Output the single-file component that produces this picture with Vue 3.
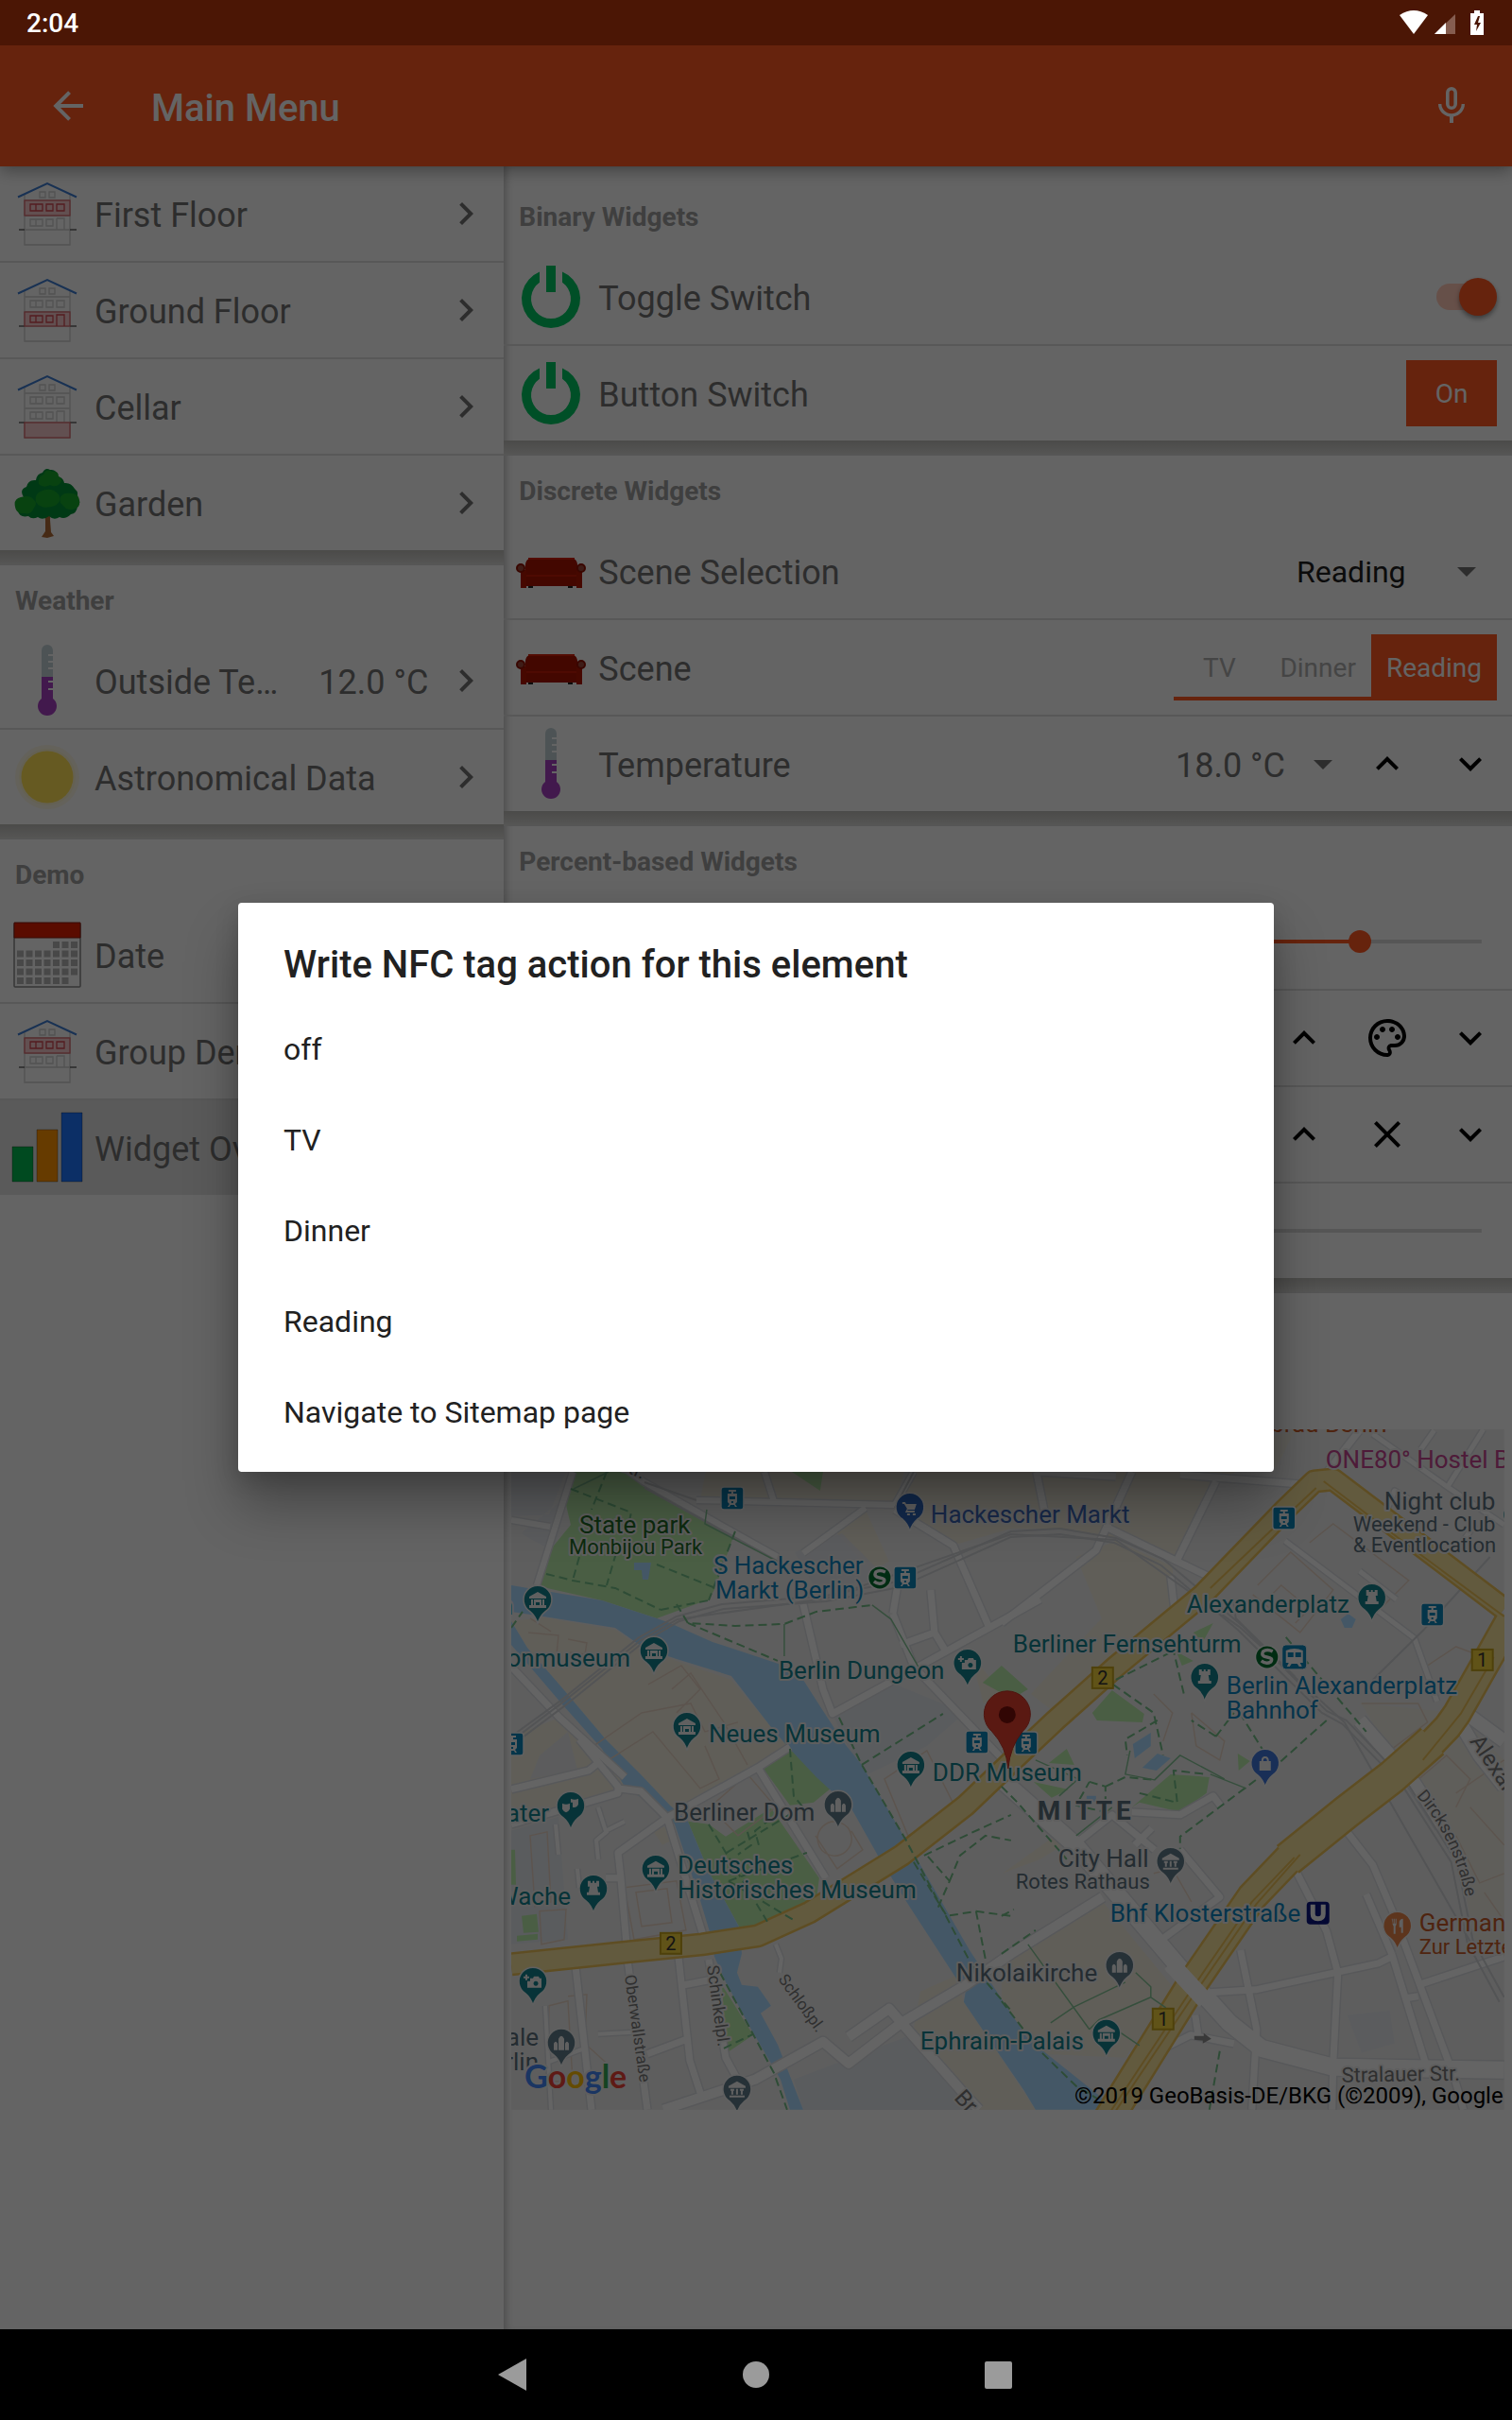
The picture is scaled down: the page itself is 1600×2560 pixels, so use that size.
<script setup>
import { ref } from 'vue'

const leftGroups = [
  {
    title: '',
    items: [
      { label: 'First Floor', icon: 'floor', level: 1 },
      { label: 'Ground Floor', icon: 'floor', level: 2 },
      { label: 'Cellar', icon: 'floor', level: 3 },
      { label: 'Garden', icon: 'tree' }
    ]
  },
  {
    title: 'Weather',
    items: [
      { label: 'Outside Temperature', icon: 'thermo', value: '12.0 °C' },
      { label: 'Astronomical Data', icon: 'sun' }
    ]
  },
  {
    title: 'Demo',
    items: [
      { label: 'Date', icon: 'calendar' },
      { label: 'Group Demo', icon: 'floor', level: 1 },
      { label: 'Widget Overview', icon: 'bars', selected: true }
    ]
  }
]

const actions = ['off', 'TV', 'Dinner', 'Reading', 'Navigate to Sitemap page']
const scenes = ['TV', 'Dinner', 'Reading']
const scene = ref('Reading')
const toggled = ref(true)
const dimmer = ref(83)
const level = ref(0)

const ICON = {
  up: 'M7.41 15.41 12 10.83l4.59 4.58L18 14l-6-6-6 6z',
  down: 'M7.41 8.58 12 13.17l4.59-4.59L18 10l-6 6-6-6z',
  right: 'M8.59 16.58 13.17 12 8.59 7.41 10 6l6 6-6 6z',
  close: 'M19 6.41 17.59 5 12 10.59 6.41 5 5 6.41 10.59 12 5 17.59 6.41 19 12 13.41 17.59 19 19 17.59 13.41 12z',
  drop: 'M7 10l5 5 5-5z',
  back: 'M20 11v2H8l5.5 5.5-1.42 1.42L4.16 12l7.92-7.92L13.5 5.5 8 11h12z',
  mic: 'M17.3 11C17.3 14 14.76 16.1 12 16.1 9.24 16.1 6.7 14 6.7 11H5C5 14.41 7.72 17.23 11 17.72V21H13V17.72C16.28 17.23 19 14.41 19 11M10.8 4.9C10.8 4.24 11.34 3.7 12 3.7 12.66 3.7 13.2 4.24 13.2 4.9L13.19 11.1C13.19 11.76 12.66 12.3 12 12.3 11.34 12.3 10.8 11.76 10.8 11.1M12 14A3 3 0 0 0 15 11V5A3 3 0 0 0 12 2 3 3 0 0 0 9 5V11A3 3 0 0 0 12 14Z',
  palette: 'M12 22A10 10 0 0 1 2 12 10 10 0 0 1 12 2C17.5 2 22 6 22 11A6 6 0 0 1 16 17H14.2C13.9 17 13.7 17.2 13.7 17.5 13.7 17.6 13.8 17.7 13.8 17.8 14.2 18.3 14.4 18.9 14.4 19.5 14.5 20.9 13.4 22 12 22M12 4A8 8 0 0 0 4 12 8 8 0 0 0 12 20C12.3 20 12.5 19.8 12.5 19.5 12.5 19.3 12.4 19.2 12.4 19.1 12 18.6 11.8 18.1 11.8 17.5 11.8 16.1 12.9 15 14.3 15H16A4 4 0 0 0 20 11C20 7.1 16.4 4 12 4M6.5 10C7.3 10 8 10.7 8 11.5S7.3 13 6.5 13 5 12.3 5 11.5 5.7 10 6.5 10M9.5 6C10.3 6 11 6.7 11 7.5S10.3 9 9.5 9 8 8.3 8 7.5 8.7 6 9.5 6M14.5 6C15.3 6 16 6.7 16 7.5S15.3 9 14.5 9 13 8.3 13 7.5 13.7 6 14.5 6M17.5 10C18.3 10 19 10.7 19 11.5S18.3 13 17.5 13 16 12.3 16 11.5 16.7 10 17.5 10Z'
}

const stepRows = [
  { buttons: [['Up', 'up'], ['Pick colour', 'palette'], ['Down', 'down']] },
  { buttons: [['Up', 'up'], ['Stop', 'close'], ['Down', 'down']] }
]

/* Calendar cells: first week starts on the fifth column, last one ends on the sixth. */
const calendarCells = []
for (let r = 0; r < 5; r++) {
  for (let c = 0; c < 7; c++) {
    if ((r === 0 && c < 4) || (r === 4 && c > 5)) continue
    calendarCells.push({ x: 4 + c * 9.5, y: 22 + r * 9.5 })
  }
}

/* Map content, on a 1051 x 720 canvas. */
const roads = [
  ['M65 45 27 165M0 96 41 103M116 38 141 56 282 135M196 75 406 80 426 45M268 45 278 76M375 83 309 131', 6],
  ['M406 85 468 123 506 210M309 185 330 275 340 301 506 210 560 180M404 195 426 251 519 348M404 195 409 165M444 170 448 215 412 228M448 215 460 235', 7],
  ['M0 251 51 305 120 368M0 418 113 385 113 378 72 328M0 381 82 361 92 353M113 380 137 383 165 411', 7],
  ['M116 545 122 545 116 475 113 448 165 411 261 358 295 336M261 358 333 475M165 411 206 545M68 568 85 720M123 561 144 720M209 561 227 665 246 700M177 558 189 668 202 708M183 588 209 583M144 661 187 645M100 475 116 475', 7],
  ['M47 418 50 450M92 400 100 425 120 415M92 455 90 435 102 425M70 465 72 485M280 545 286 560 284 575M36 610 42 720M38 670 75 656M92 640 130 638', 4],
  ['M161 720 258 688 330 648 357 671 413 628 481 588 529 555 626 495M413 628 481 705 495 720M357 643 400 613 413 628', 10],
  ['M519 371 598 441 712 575 760 628 794 655 870 675 1051 678', 18],
  ['M519 205 619 128 657 45M633 105 743 158M705 138 746 55M698 155 702 191M708 48 836 58M898 1 856 55M640 50 560 45M556 45 564 85', 7],
  ['M912 5 991 61 1051 101M1029 0 991 61M977 1 963 21M925 90 935 65 960 80M819 118 956 221 980 288M898 150 937 180M1000 130 1020 100', 5],
  ['M884 425 912 461 932 508 998 685 1008 720M932 555 970 678M831 468 863 531 875 575 870 671 869 720M739 596 788 593 918 565 932 558M960 588 1051 558M772 551 789 635 784 720M905 492 932 555M947 602 960 600', 7],
  ['M691 538 750 495 708 445M657 405 708 408 743 388 752 400M602 435 636 408 681 445M660 440 678 422M691 655 719 641 765 650M724 620 727 640', 7],
  ['M898 308 956 375 985 420M998 300 1025 345 1051 378M1010 300 1051 330', 14]
]
const rails = [
  'M0 325 51 288 134 221 175 198 223 185 333 176 409 161 529 108 581 105 640 115 691 138 774 208 863 298 884 308 949 375 1001 458 1018 541 1051 601',
  'M0 335 56 293 139 226 178 203 225 190 333 182 411 167 529 114 581 111 638 120 688 144 769 212 858 300 880 312 944 378 995 458 1012 543 1046 606',
  'M0 330 53 290 136 224 176 201 333 179 529 111 640 117 772 210 882 310 1015 542',
  'M141 56 196 75M141 62 282 140M406 83 426 45M764 180 767 200 830 262M1036 135 967 211 912 265'
]
const paths = [
  'M63 63 127 88 122 110M37 153 65 160 110 168 158 191M72 135 65 160M111 131 101 165M154 143 216 168M237 108 209 181M158 191 209 181M175 185 187 205 237 208 289 206 323 193 382 186M187 205 282 245M101 45 85 85',
  'M371 355 457 301M347 305 371 355 418 435 488 568 529 615M437 451 485 428 529 408M464 478 475 451 502 430 529 435M426 458 461 515 492 510 529 515M492 510 502 561M441 452 464 478 450 510',
  'M295 338 299 388 313 405M209 418 271 521M228 448 299 405M230 478 313 448M230 478 300 520M250 426 254 440 240 450M262 440 258 425 275 412M0 210 12 193',
  'M863 308 815 351 708 431 708 444M746 325 720 308M684 308 650 328 652 345M612 373 629 378 629 405 598 398 612 373M629 378 650 368 681 371M519 378 536 395 588 455M665 385 705 395 701 361 736 365M746 325 765 300M771 300 796 340',
  'M750 658 739 720M519 605 560 658 598 695 620 708M221 575 278 681 292 720M225 655 256 640M519 515 532 508M519 555 555 530M637 270 680 300 690 345M640 265 700 235M700 230 712 280M820 220 905 320'
]
const greenLines = ['M382 186 402 201 433 255M289 206 289 240M103 45 66 63M207 85 205 100 282 140M547 545 612 635M571 628 596 611 650 585M612 635 622 625 677 601 677 590 661 575M677 601 693 612M655 340 650 365 681 371 708 345 755 370M598 430 636 400M555 350 600 370 580 388M640 635 665 652M740 365 778 380']
const buildings = [
  'M80 340 138 300 190 290 205 320 240 310M95 355 150 320 175 350 200 380 220 370 205 335M170 275 190 258 225 310 250 355M145 270 180 250 200 275 175 300M18 215 50 218 48 238 25 240M60 222 80 226 78 238 62 236M20 200 42 214',
  'M120 485 175 478 185 530 130 540zM132 490 165 486 170 522 138 526zM210 400 250 365 280 400 240 430zM20 430 38 426 42 500 25 505zM30 510 58 508 56 540 32 545zM330 420a18 18 0 1 0 30 10 18 18 0 0 0-30-10M322 430 345 465 372 445 360 425M395 370 440 340 470 400 420 430z',
  'M790 165 825 130 870 170 835 215 785 175M800 180 815 165 845 190 830 205M845 120 870 100 950 160 920 190M60 600 80 598 78 650 100 670M40 610 60 605 65 690 38 690z',
  'M720 300 725 335 750 350 755 330 720 300M955 375 990 345 1015 370 1000 400M1000 385 1051 350M1015 400 1051 440M1000 430 1025 480 1051 470M1030 490 1051 520M680 470 700 465 720 500M900 290 960 290 970 310 930 340M970 250 1000 230 1040 245M680 280 700 300 690 330'
]

const T = '#12818c', B = '#0c83bd', S = '#5b6f7c', G = '#1e6b26', O = '#c65a28', N = '#3c68b8'
const labels = [
  { t: 'State park', x: 72, y: 110, c: G },
  { t: 'Monbijou Park', x: 61, y: 132, c: G, s: 1 },
  { t: 'S Hackescher', x: 214, y: 153, c: B },
  { t: 'Markt (Berlin)', x: 216, y: 179, c: B },
  { t: 'Hackescher Markt', x: 444, y: 99, c: N },
  { t: 'n', x: 2, y: 196, c: T, a: 'end' },
  { t: 'onmuseum', x: 126, y: 251, c: T, a: 'end' },
  { t: 'Berlin Dungeon', x: 283, y: 264, c: T },
  { t: 'Neues Museum', x: 209, y: 331, c: T },
  { t: 'DDR Museum', x: 446, y: 372, c: T },
  { t: 'Berliner Dom', x: 172, y: 414, c: S },
  { t: 'ater', x: 40, y: 415, c: T, a: 'end' },
  { t: 'Deutsches', x: 176, y: 470, c: T },
  { t: 'Historisches Museum', x: 176, y: 496, c: T },
  { t: 'Wache', x: 63, y: 503, c: T, a: 'end' },
  { t: 'Nikolaikirche', x: 471, y: 584, c: S },
  { t: 'Ephraim-Palais', x: 433, y: 656, c: T },
  { t: 'ale', x: 29, y: 652, c: S, a: 'end' },
  { t: 'rlin', x: 29, y: 678, c: S, a: 'end' },
  { t: 'Berliner Fernsehturm', x: 531, y: 236, c: T },
  { t: 'Alexanderplatz', x: 715, y: 194, c: T },
  { t: 'Berlin Alexanderplatz', x: 757, y: 280, c: B },
  { t: 'Bahnhof', x: 757, y: 306, c: B },
  { t: 'Night club', x: 924, y: 85, c: S },
  { t: 'Weekend - Club', x: 891, y: 108, c: S, s: 1 },
  { t: '& Eventlocation', x: 891, y: 130, c: S, s: 1 },
  { t: 'ONE80° Hostel B', x: 862, y: 41, c: '#c2458f' },
  { t: 'Hofbräu Berlin', x: 927, y: 3, c: O, a: 'end' },
  { t: 'City Hall', x: 579, y: 463, c: S },
  { t: 'Rotes Rathaus', x: 534, y: 486, c: S, s: 1 },
  { t: 'Bhf Klosterstraße', x: 634, y: 521, c: B },
  { t: 'German', x: 961, y: 531, c: O },
  { t: 'Zur Letzte', x: 961, y: 555, c: O, s: 1 }
]
const streets = [
  { t: 'Oberwallstraße', x: 120, y: 578, r: 82, f: 17 },
  { t: 'Schinkelpl.', x: 207, y: 568, r: 82, f: 18 },
  { t: 'Schloßpl.', x: 282, y: 582, r: 54, f: 17 },
  { t: 'Br', x: 468, y: 708, r: 48, f: 24 },
  { t: 'Str.', x: 112, y: 41, r: 24, f: 20 },
  { t: 'Alexan', x: 1014, y: 330, r: 56, f: 24 },
  { t: 'Stralauer Str.', x: 879, y: 691, r: -1, f: 22 }
]
const GLYPH = {
  museum: 'M0-9-9-4v2H9v-2zM-7-1h2v6h-2zM5-1h2v6H5zM-9 5H9v3H-9zM-4-1h8v6h-2v-3h-4v3h-2z',
  camera: 'M-3-4h3l1-2h5l1 2h2v10H-6v-7h3zM-8-8h2v2h2v2h-2v2h-2v-2h-2v-2h2zM3-1a2.500 2.500 0 1 0 .1 0z',
  castle: 'M-6-9h3v2h2v-2h2v2h2v-2h3v6h-2l1 6h2v3h-14v-3h2l1-6h-2z',
  church: 'M-8 0q2-4 4 0v7h-4zM4 0q2-4 4 0v7h-4zM-3-5q3-6 6 0V7h-6z',
  civic: 'M0-9-9-4v2H9v-2zM-7-1h4v2h-1v4h-2v-4h-1zM3-1h4v2H6v4H4v-4H3zM-1-1h2v6h-2zM-8 6H8v2H-8z',
  cart: 'M-8-6h3l1 2H7l-2 6h-7l-1 1h8v2h-10l2-4-3-5h-2zM-3 6h3v2h-3zM3 6h3v2H3z',
  bag: 'M-6-3h2q0-5 4-5t4 5h2v10H-6zM-2-3h4q0-3-2-3t-2 3z',
  theatre: 'M-9-3q4 2 8 0v6q-4 7-8 0zM0-8q4 2 8 0v6q-2 4-6 3v-5h-2z',
  food: 'M-6-8h1v5h1v-5h1v5h1v-5h1v6l-1 2v8h-2v-8l-1-2zM2-5q1-3 4-3v15h-2v-6h-2z'
}
const pins = [
  [28, 181, 'museum', T], [151, 235, 'museum', T], [186, 315, 'museum', T], [483, 248, 'camera', T],
  [422, 83, 'cart', '#2f66bd'], [423, 356, 'museum', T], [63, 399, 'theatre', T], [153, 466, 'museum', T],
  [87, 487, 'castle', T], [23, 585, 'camera', T], [53, 650, 'church', '#607c8a'], [239, 699, 'civic', '#607c8a'],
  [346, 398, 'church', '#607c8a'], [911, 179, 'castle', T], [734, 263, 'castle', T], [798, 354, 'bag', '#3f76d9'],
  [698, 458, 'civic', '#607c8a'], [644, 568, 'church', '#607c8a'], [630, 640, 'museum', T],
  [938, 526, 'food', '#e8844a'], [1065, 91, 'museum', T]
]
const trams = [[234, 73], [417, 157], [493, 331], [1, 333], [818, 94], [975, 196], [545, 332]]
const shields = [[169, 544, '2'], [626, 263, '2'], [1028, 244, '1'], [690, 624, '1']]
const sbahn = [[390, 157], [800, 241]]
const google = [['G', '#4285f4'], ['o', '#ea4335'], ['o', '#fbbc05'], ['g', '#4285f4'], ['l', '#34a853'], ['e', '#ea4335']]
</script>

<template>
  <div class="screen">
    <div class="status-bar">
      <span class="clock">2:04</span>
      <svg class="status-icons" viewBox="0 0 92 28" aria-hidden="true">
        <path d="M1 6Q16-4 31 6L16 26z" fill="#fff" />
        <path d="M60 5v21H38z" fill="#855d50" />
        <path d="M50 14v12H38z" fill="#fff" />
        <path d="M76 4h4V1h6v3h4v23H76z" fill="#fff" />
        <path d="M84 7l-4 9h3l-1 7 5-9h-3l2-7z" fill="#4b1605" />
      </svg>
    </div>

    <header class="app-bar">
      <button class="icon-button" aria-label="Back"><svg class="ic" viewBox="0 0 24 24"><path :d="ICON.back" /></svg></button>
      <h1>Main Menu</h1>
      <button class="icon-button" aria-label="Voice"><svg class="ic" viewBox="0 0 24 24"><path :d="ICON.mic" /></svg></button>
    </header>

    <main class="panes">
      <nav class="left-pane">
        <section v-for="group in leftGroups" :key="group.title" class="group">
          <h2 v-if="group.title">{{ group.title }}</h2>
          <a v-for="item in group.items" :key="item.label" href="#" class="row" :class="{ selected: item.selected }">
            <svg class="item-icon" viewBox="0 0 72 72" aria-hidden="true">
              <g v-if="item.icon === 'floor'" fill="none" stroke-width="1.3">
                <g stroke="#cdcdcd">
                  <path d="M12 16V69H60V16M12 22H60M12 38H60M12 53H60M28 13h6v6h-6zM38 13h6v6h-6z" />
                  <path d="M18 26h6v7h-6zM24 26h7v7h-7zM35 26h7v7h-7zM46 26h8v7h-8zM18 42h6v7h-6zM24 42h7v7h-7zM35 42h7v7h-7zM46 41h8v12M46 41v12" />
                </g>
                <path d="M6 53h6M60 53h7" stroke="#666" />
                <path d="M5 18.500 36 4 67 18.500" stroke="#3d7bd0" stroke-width="2" />
                <g stroke="#d8646a">
                  <rect v-if="item.level === 1" x="12" y="22" width="48" height="16" fill="#f5c8ca" />
                  <path v-if="item.level === 1" d="M18 26h6v7h-6zM24 26h7v7h-7zM35 26h7v7h-7zM46 26h8v7h-8z" stroke="#d04850" />
                  <rect v-if="item.level === 2" x="12" y="38" width="48" height="15" fill="#f5c8ca" />
                  <path v-if="item.level === 2" d="M18 42h6v7h-6zM24 42h7v7h-7zM35 42h7v7h-7zM46 53V41h8v12" stroke="#d04850" />
                  <rect v-if="item.level === 3" x="12" y="53" width="48" height="16" fill="#f5c8ca" />
                </g>
              </g>
              <g v-else-if="item.icon === 'tree'">
                <path d="M32 40h8l-1 14 1 13 3 4-7 2-6-1 4-6 0-12z" fill="#b06a35" />
                <path d="M5 45q-5-6-1-11 2-4 7-4-5-8 3-11 2-8 10-7 1-7 7-8 3-6 8-3 7-1 8 7 6 1 7 7 7-1 11 6 5 4 2 9 6 5 1 10-1 7-7 8-6 6-12 3-6 4-11-1-7 5-12 1-6 3-10-1-9 2-11-5z" fill="#008f35" />
                <path d="M27 16q-1-8 5-10 3-7 9-3 7-1 7 5 6 3 1 8-5 4-10 1-7 4-12-1zM2 40q-2-8 6-10 10-3 14 3 4 3 0 8-3 8-10 6-9 1-10-7zM24 35q-2-9 7-12 10-4 17 4 4 7-4 12-14 5-20-4zM50 36q-2-8 5-10 8-1 13 2 4 6 1 12-6 5-13 2z" fill="#16a52a" />
              </g>
              <g v-else-if="item.icon === 'thermo'">
                <path d="M30 32V4a6 6 0 0 1 12 0v4h-5v2h5v5h-5v2h5v5h-5v2h5v8z" fill="#c1d0d5" />
                <path d="M30 32h12v4h-5v2h5v6h-5v2h5v9a10 10 0 1 1-12 0z" fill="#a63fc0" />
              </g>
              <g v-else-if="item.icon === 'sun'">
                <circle cx="36" cy="36" r="34" fill="#f8f0c8" opacity=".45" />
                <circle cx="36" cy="36" r="30" fill="#fbf3d0" />
                <circle cx="36" cy="36" r="27.500" fill="#ffe055" />
              </g>
              <g v-else-if="item.icon === 'calendar'">
                <rect x="1" y="3" width="70" height="67" rx="1" fill="#fafafa" stroke="#858585" stroke-width="1.500" />
                <path d="M1 2h70v16H1z" fill="#e01e00" stroke="#8a1a0c" />
                <rect v-for="(cell, i) in calendarCells" :key="i" :x="cell.x" :y="cell.y" width="7" height="7" fill="#b4b4b4" />
              </g>
              <g v-else stroke-opacity=".3" stroke="#000">
                <path d="M-1 35h22v37H-1z" fill="#00b950" />
                <path d="M25 17h22v55H25z" fill="#ff9500" />
                <path d="M51-1h22v73H51z" fill="#2076ff" />
              </g>
            </svg>
            <span class="label">{{ item.label }}</span>
            <span v-if="item.value" class="value">{{ item.value }}</span>
            <svg class="ic" viewBox="0 0 24 24" aria-hidden="true"><path :d="ICON.right" /></svg>
          </a>
        </section>
      </nav>

      <div class="right-pane">
        <section class="group">
          <h2>Binary Widgets</h2>
          <div class="row">
            <svg class="item-icon" viewBox="0 0 72 72" fill="#00c562"><path d="M24 9.400A31 31 0 1 0 48 9.400V20.800A21 21 0 1 1 24 20.800zM31 3h10v28H31z" /></svg>
            <label class="label" for="toggle">Toggle Switch</label>
            <input id="toggle" v-model="toggled" type="checkbox" class="toggle" />
          </div>
          <div class="row">
            <svg class="item-icon" viewBox="0 0 72 72" fill="#00c562"><path d="M24 9.400A31 31 0 1 0 48 9.400V20.800A21 21 0 1 1 24 20.800zM31 3h10v28H31z" /></svg>
            <span class="label">Button Switch</span>
            <div class="segments"><button class="active">On</button></div>
          </div>
        </section>

        <section class="group">
          <h2>Discrete Widgets</h2>
          <div v-for="kind in ['Scene Selection', 'Scene']" :key="kind" class="row">
            <svg class="item-icon" viewBox="0 0 72 72" aria-hidden="true">
              <path d="M12 51h5v3h-5zM54 51h5v3h-5z" fill="#222" />
              <path d="M9 32q-1-10 9-10h37q10 0 9 10v20H9z" fill="#a81200" />
              <path d="M10 40h53v2H10z" fill="#c21a06" />
              <path d="M12 23h49" stroke="#cf2008" stroke-width="2" />
              <path d="M4 35h6v19H4zM63 35h6v19h-6z" fill="#b01400" />
              <circle cx="4" cy="33" r="4" fill="#9c4a3c" stroke="#8e1000" stroke-width="2" />
              <circle cx="68" cy="33" r="4" fill="#9c4a3c" stroke="#8e1000" stroke-width="2" />
            </svg>
            <label v-if="kind === 'Scene Selection'" class="label" for="scene">{{ kind }}</label>
            <span v-else class="label">{{ kind }}</span>
            <div v-if="kind === 'Scene Selection'" class="select">
              <select id="scene" v-model="scene">
                <option v-for="s in scenes" :key="s">{{ s }}</option>
              </select>
              <svg class="ic" viewBox="0 0 24 24" aria-hidden="true"><path :d="ICON.drop" /></svg>
            </div>
            <div v-else class="segments">
              <button v-for="s in scenes" :key="s" :class="{ active: s === scene }" @click="scene = s">{{ s }}</button>
            </div>
          </div>
          <div class="row flush">
            <svg class="item-icon" viewBox="0 0 72 72" aria-hidden="true">
              <path d="M30 32V4a6 6 0 0 1 12 0v4h-5v2h5v5h-5v2h5v5h-5v2h5v8z" fill="#c1d0d5" />
              <path d="M30 32h12v4h-5v2h5v6h-5v2h5v9a10 10 0 1 1-12 0z" fill="#a63fc0" />
            </svg>
            <span class="label">Temperature</span>
            <span class="value">18.0 °C</span>
            <svg class="ic" viewBox="0 0 24 24" aria-hidden="true"><path :d="ICON.drop" /></svg>
            <div class="steps">
              <button class="step" aria-label="Up"><svg class="ic" viewBox="0 0 24 24"><path :d="ICON.up" /></svg></button>
              <button class="step" aria-label="Down"><svg class="ic" viewBox="0 0 24 24"><path :d="ICON.down" /></svg></button>
            </div>
          </div>
        </section>

        <section class="group">
          <h2>Percent-based Widgets</h2>
          <div class="row sliding">
            <input v-model="dimmer" class="slider" type="range" aria-label="Brightness" :style="{ '--fill': dimmer + '%' }" />
          </div>
          <div v-for="(r, i) in stepRows" :key="i" class="row flush end">
            <div class="steps">
              <button v-for="b in r.buttons" :key="b[0]" class="step" :aria-label="b[0]">
                <svg class="ic" viewBox="0 0 24 24"><path :d="ICON[b[1]]" /></svg>
              </button>
            </div>
          </div>
          <div class="row sliding">
            <input v-model="level" class="slider" type="range" aria-label="Level" :style="{ '--fill': level + '%' }" />
          </div>
        </section>

        <section class="map-group">
          <svg class="map" viewBox="0 0 1051 720" role="img" aria-label="Map">
            <rect width="1051" height="720" fill="#ebebeb" />
            <g fill="#f0ebdc">
              <path d="M0 203 34 199 110 212 140 233 233 265 292 335 264 355 165 411 137 375 100 328 56 276 17 231z" />
              <path d="M0 325 51 305 120 375 105 388 0 415z" />
              <path d="M209 30 420 30 406 80 200 74zM430 30 800 30 746 55 705 138 640 115 581 105 529 105 470 122 410 85z" />
              <path d="M598 135 640 118 700 145 702 190 640 245 576 300 550 280 625 200z" />
              <path d="M519 560 622 495 700 590 650 665 560 661 519 610zM433 595 471 578 479 606 555 720 495 720 425 640z" />
              <path d="M600 430 560 455 520 470 590 420zM345 110 375 85 400 140 380 150zM485 235 520 280 500 290zM150 425 165 420 170 435 160 440z" />
              <path d="M800 10 830 0 810 40 790 45zM900 290 1000 300 1051 350 1051 560 1020 540 1000 440 950 375z" opacity=".7" />
            </g>
            <g fill="#e1e5ec">
              <path d="M340 301 402 268 480 300 440 335 371 368zM299 688 426 640 495 720 309 720zM0 425 50 410 60 540 0 545z" />
              <path d="M30 345 60 320 70 360 20 370zM60 70 10 110 45 130zM885 620 930 615 935 650 900 660zM300 130 350 110 400 160 320 165zM0 40 60 40 40 90 0 92z" opacity=".7" />
            </g>
            <g fill="#b9ebaa">
              <path d="M66 20 103 30 141 56 182 78 237 108 216 168 209 180 154 200 96 181 29 166 41 128 63 101 58 80z" />
              <path d="M264 355 292 335 344 375 320 395 295 398zM187 415 209 418 227 431 275 401 326 475 323 498 271 525 242 528 209 468zM223 588 256 641 228 660z" />
              <path d="M499 268 519 250 547 275 530 285zM615 300 636 276 670 301 668 310 620 308zM569 353 588 338 596 355zM553 373 590 381 572 390z" />
              <path d="M657 400 698 365 739 368 736 385 708 405 665 395zM769 343 782 351 770 361zM722 215 743 205 732 225zM704 235 722 245 710 250zM297 45 330 45 327 65z" />
              <path d="M0 445 4 445 5 482 0 482zM11 515 27 513 29 532 13 533zM6 536 28 534 28 540 6 542z" />
            </g>
            <g fill="#aadaff">
              <path d="M0 165 96 181 154 200 168 205 213 225 289 250 309 265 325 290 351 330 371 355 418 435 485 551 529 618 547 645 626 708 630 720 555 720 543 700 519 665 479 606 481 595 471 581 419 501 388 451 361 403 323 368 292 335 275 315 233 261 175 243 140 231 110 210 34 198 0 193z" />
              <path d="M0 203 17 231 56 276 100 328 137 365 168 398 187 415 209 468 242 528 244 555 239 575 244 588 261 590 275 610 264 618 282 651 309 720 295 720 285 688 254 635 227 585 215 558 211 535 199 495 173 418 165 408 120 378 96 338 54 291 0 228z" />
              <path d="M130 141h18l-3 18h-6l-1-10h-8zM658 333 677 321 677 335 660 348zM668 358 684 343 698 348 683 361zM878 201 886 195 894 201 890 210 882 210zM609 388h10v6h-10z" />
            </g>
            <g fill="none" stroke="#e6d3c4" stroke-width="1.500"><path v-for="(d, i) in buildings" :key="i" :d="d" /></g>
            <g fill="none" stroke-linejoin="round">
              <path v-for="(r, i) in roads" :key="'e' + i" :d="r[0]" stroke="#dadce0" :stroke-width="r[1] + 3" />
              <path v-for="(r, i) in roads" :key="'r' + i" :d="r[0]" stroke="#fbfbfb" :stroke-width="r[1]" />
              <path v-for="(d, i) in rails" :key="'l' + i" :d="d" stroke="#cfd1d5" stroke-width="2" />
              <g v-for="layer in [['#ecc158', 25, 38], ['#f5e09c', 20, 33]]" :key="layer[1]" :stroke="layer[0]">
                <path d="M0 566 123 553 202 545 261 536 316 511 413 451 481 398 526 355 576 308 640 251 732 175 819 85 850 55 870 53 960 121 1051 190" :stroke-width="layer[1]" />
                <path d="M629 735 722 585 784 495 829 448" :stroke-width="layer[2] - 4" />
                <path d="M822 455 884 405 932 368 975 330" :stroke-width="layer[2]" />
                <path d="M965 342 991 315 1001 301 1035 241 1058 200" :stroke-width="layer[2] - 6" />
              </g>
              <g stroke="#ecc158" stroke-width="2">
                <path d="M629 730 722 590 784 500 829 453M634 730 727 592 789 502 835 450M965 350 1005 301 1040 241M860 55 955 127 1051 198M740 168 820 92 852 62" />
              </g>
              <path d="M698 565 735 605" stroke="#fbfbfb" stroke-width="18" />
              <path v-for="(d, i) in paths" :key="'p' + i" :d="d" stroke="#74bd88" stroke-width="2" stroke-dasharray="9 5" />
              <path v-for="(d, i) in greenLines" :key="'g' + i" :d="d" stroke="#86c497" stroke-width="1.500" />
            </g>
            <path d="M723 642h10v-3l8 6-9 5v-3l-9-1z" fill="#909090" />

            <g v-for="(p, i) in trams" :key="'t' + i" :transform="`translate(${p[0]} ${p[1]})`">
              <rect x="-12" y="-12" width="24" height="24" rx="3" fill="#0a84b8" stroke="#f2f2f2" stroke-width="1.500" />
              <path d="M-4-9h8v2H1v2h4v9l-2 2 2 3h-2l-1-2h-4l-1 2h-2l2-3-2-2v-9h4v-2h-3zM-3-2v3h6v-3zM-1 3v2h2v-2z" fill="#f4f4f4" fill-rule="evenodd" />
            </g>
            <g v-for="(p, i) in sbahn" :key="'s' + i" :transform="`translate(${p[0]} ${p[1]})`">
              <circle r="13" fill="#f4f4f4" />
              <circle r="11.500" fill="#006e2e" />
              <path d="M6-6Q0-9-4-6-7-1 0 0 7 1 4 5-1 8-6 4" fill="none" stroke="#f4f4f4" stroke-width="3.500" />
            </g>
            <g transform="translate(829 241)">
              <rect x="-13" y="-13" width="26" height="26" rx="4" fill="#0a84b8" stroke="#f2f2f2" />
              <path d="M-9-7q9-4 18 0V6H6l2 4H5L3 7h-6l-2 3h-3l2-4h-3zM-7-5v5h6v-5zM1-5v5h6v-5z" fill="#f4f4f4" fill-rule="evenodd" />
            </g>
            <g transform="translate(854 512)">
              <rect x="-12" y="-12" width="24" height="24" rx="4" fill="#0a1680" />
              <path d="M-5.500-9v10q0 5 5.500 5t5.500-5v-10" fill="none" stroke="#f4f4f4" stroke-width="5" />
            </g>
            <g v-for="(p, i) in shields" :key="'h' + i">
              <rect :x="p[0] - 11" :y="p[1] - 11" width="22" height="22" fill="#f0cf3c" stroke="#c4a21c" stroke-width="2" />
              <text :x="p[0]" :y="p[1] + 7" class="shield">{{ p[2] }}</text>
            </g>
            <g v-for="(p, i) in pins" :key="'i' + i" :transform="`translate(${p[0]} ${p[1]})`">
              <path d="M0 25Q-2 17-8 12A15 15 0 1 1 8 12Q2 17 0 25z" :fill="p[3]" stroke="#efefef" stroke-width="1.500" />
              <path :d="GLYPH[p[2]]" fill="#f0f0f0" fill-rule="evenodd" />
            </g>

            <g class="map-text">
              <text v-for="l in labels" :key="l.t + l.x" :x="l.x" :y="l.y" :fill="l.c" :text-anchor="l.a || 'start'" :font-size="l.s ? 22 : 26">{{ l.t }}</text>
              <text x="557" y="413" fill="#5b6f7c" font-size="28" font-weight="700" class="district">MITTE</text>
              <text v-for="s in streets" :key="s.t" :transform="`translate(${s.x} ${s.y}) rotate(${s.r})`" fill="#777" :font-size="s.f">{{ s.t }}</text>
              <path id="dircksen" d="M958 388Q1000 435 1012 505" fill="none" stroke="none" />
              <text fill="#777" font-size="18"><textPath href="#dircksen">Dircksenstraße</textPath></text>
            </g>
            <g transform="translate(525 302)">
              <path d="M1 57Q-1 34-16 18A24.500 24.500 0 1 1 16 18Q3 34 1 57z" fill="#e2402f" stroke="#c23225" />
              <circle r="9" fill="#7c0f0a" />
            </g>
            <text x="14" y="697" class="google"><tspan v-for="(g, i) in google" :key="i" :fill="g[1]">{{ g[0] }}</tspan></text>
            <text x="1050" y="713" class="copyright">©2019 GeoBasis-DE/BKG (©2009), Google</text>
          </svg>
        </section>
      </div>
    </main>

    <div class="scrim">
      <div class="dialog" role="dialog" aria-labelledby="dialog-title">
        <h2 id="dialog-title">Write NFC tag action for this element</h2>
        <button v-for="a in actions" :key="a">{{ a }}</button>
      </div>
    </div>

    <footer class="nav-bar">
      <button aria-label="Back"><svg viewBox="0 0 48 48"><path d="M7 24 37 7v34z" /></svg></button>
      <button aria-label="Home"><svg viewBox="0 0 48 48"><circle cx="24" cy="24" r="14" /></svg></button>
      <button aria-label="Recents"><svg viewBox="0 0 48 48"><rect x="10" y="10" width="29" height="29" rx="2" /></svg></button>
    </footer>
  </div>
</template>

<style>
body {
  margin: 0;
  background: #000;
}
</style>

<style scoped>
.screen {
  position: relative;
  display: flex;
  flex-direction: column;
  min-height: 100vh;
  background: #fafafa;
  font-family: Roboto, "Noto Sans", sans-serif;
  overflow: hidden;
}
.screen * {
  box-sizing: border-box;
}
h1,
h2 {
  margin: 0;
}
button {
  padding: 0;
  border: 0;
  background: none;
  font-family: inherit;
  cursor: pointer;
}
.ic {
  display: block;
  flex: none;
  width: 48px;
  height: 48px;
  fill: currentColor;
}
.status-bar {
  position: relative;
  z-index: 3;
  display: flex;
  align-items: center;
  justify-content: space-between;
  height: 48px;
  padding: 0 28px;
  background: #4b1605;
  color: #fff;
}
.clock {
  padding-top: 2px;
  font-size: 28px;
  font-weight: 500;
  line-height: 48px;
}
.status-icons {
  width: 92px;
  height: 28px;
}
.app-bar {
  position: relative;
  z-index: 1;
  display: flex;
  align-items: center;
  height: 128px;
  padding: 0 40px 0 48px;
  background: #ff5722;
  color: #fafafa;
  box-shadow: 0 4px 16px rgba(0, 0, 0, 0.36);
}
.app-bar .icon-button {
  color: inherit;
}
.app-bar h1 {
  flex: 1;
  padding: 6px 0 0 64px;
  font-size: 40px;
  font-weight: 500;
  line-height: 48px;
}
.panes {
  display: grid;
  flex: 1;
  grid-template-columns: 1fr 2fr;
}
.left-pane {
  min-width: 0;
}
.right-pane {
  min-width: 0;
  padding-top: 16px;
  box-shadow: inset 6px 0 8px -4px rgba(0, 0, 0, 0.26);
}
.group {
  position: relative;
}
.group:not(:last-child)::after,
.right-pane .group::after {
  display: block;
  height: 16px;
  background: linear-gradient(#bbbab6, #d9d9d7);
  content: "";
}
.group h2 {
  height: 72px;
  padding: 2px 16px 0;
  color: #9d9d9d;
  font-size: 28px;
  font-weight: 700;
  line-height: 72px;
}
.row {
  display: flex;
  align-items: center;
  gap: 14px;
  height: 102px;
  padding: 0 16px 0 14px;
  border-bottom: 2px solid #dcdcdc;
  color: #727272;
  text-decoration: none;
}
.row:last-child {
  height: 100px;
  border-bottom: 0;
}
.row.selected {
  background: #e2e2e2;
}
.row.flush {
  padding-right: 0;
}
.row.end {
  justify-content: flex-end;
}
.item-icon {
  flex: none;
  width: 72px;
  height: 72px;
  overflow: visible;
}
.label,
.value {
  padding-top: 3px;
  font-size: 36px;
  line-height: 48px;
  white-space: nowrap;
}
.label {
  flex: 1;
  min-width: 0;
  overflow: hidden;
  text-overflow: ellipsis;
}
.value {
  padding-right: 2px;
  padding-left: 16px;
}
.toggle {
  position: relative;
  width: 64px;
  height: 40px;
  margin: 0;
  appearance: none;
}
.toggle::before {
  position: absolute;
  inset: 6px 8px 6px 0;
  border-radius: 14px;
  background: #ffc7b6;
  content: "";
}
.toggle::after {
  position: absolute;
  top: 0;
  left: 0;
  width: 40px;
  height: 40px;
  border-radius: 50%;
  background: #f1f1f1;
  box-shadow: 0 3px 5px rgba(0, 0, 0, 0.4);
  content: "";
}
.toggle:checked::after {
  left: 24px;
  background: #ff5722;
}
.segments {
  display: flex;
}
.segments button {
  min-width: 96px;
  height: 70px;
  padding: 6px 16px 0;
  border-bottom: 4px solid #ff5722;
  color: #adadad;
  font-size: 28px;
  line-height: 32px;
}
.segments .active {
  background: #ff5722;
  color: #fafafa;
}
.select {
  position: relative;
  width: 212px;
  color: #727272;
}
.select select {
  width: 100%;
  height: 64px;
  padding: 2px 0 0;
  border: 0;
  background: none;
  color: #202020;
  font-family: inherit;
  font-size: 32px;
  appearance: none;
}
.select .ic {
  position: absolute;
  top: 8px;
  right: 8px;
  pointer-events: none;
}
.steps {
  display: flex;
  margin-left: -14px;
}
.step {
  display: flex;
  justify-content: center;
  width: 88px;
  color: #000;
}
.sliding {
  padding-right: 32px;
  padding-left: 320px;
}
.slider {
  flex: 1;
  height: 24px;
  margin: 0;
  background: linear-gradient(to right, #ff5722 var(--fill), #d6d6d6 var(--fill)) center / 100% 4px no-repeat;
  appearance: none;
}
.slider::-webkit-slider-thumb {
  width: 24px;
  height: 24px;
  border-radius: 50%;
  background: #ff5722;
  appearance: none;
}
.map-group {
  padding: 144px 8px 232px;
}
.map {
  display: block;
  width: 100%;
  overflow: hidden;
}
.map-text text {
  stroke: #ececec;
  stroke-width: 4px;
  stroke-linejoin: round;
  paint-order: stroke;
}
.district {
  letter-spacing: 4px;
}
.shield {
  fill: #333;
  font-size: 20px;
  text-anchor: middle;
}
.google {
  font-family: Lato, sans-serif;
  font-size: 34px;
  font-weight: 700;
  stroke: #ececec;
  stroke-width: 4px;
  paint-order: stroke;
}
.copyright {
  fill: #000;
  font-size: 24px;
  text-anchor: end;
}
.scrim {
  position: absolute;
  inset: 0 0 96px;
  z-index: 2;
  display: flex;
  align-items: center;
  justify-content: center;
  padding-top: 48px;
  background: rgba(0, 0, 0, 0.6);
}
.dialog {
  display: flex;
  flex-direction: column;
  width: 68.5%;
  padding: 42px 0 16px;
  border-radius: 4px;
  background: #fff;
  box-shadow: 0 36px 56px rgba(0, 0, 0, 0.3), 0 8px 24px rgba(0, 0, 0, 0.16);
}
.dialog h2 {
  padding: 0 48px 16px;
  color: #212121;
  font-size: 40px;
  font-weight: 500;
  line-height: 48px;
}
.dialog button {
  height: 96px;
  padding: 2px 48px 0;
  color: #212121;
  font-size: 32px;
  text-align: left;
}
.nav-bar {
  position: relative;
  z-index: 3;
  display: flex;
  align-items: center;
  justify-content: center;
  gap: 160px;
  height: 96px;
  background: #000;
}
.nav-bar button {
  width: 96px;
}
.nav-bar svg {
  display: block;
  width: 48px;
  height: 48px;
  margin: 0 auto;
  fill: #9b9b9b;
}
</style>
